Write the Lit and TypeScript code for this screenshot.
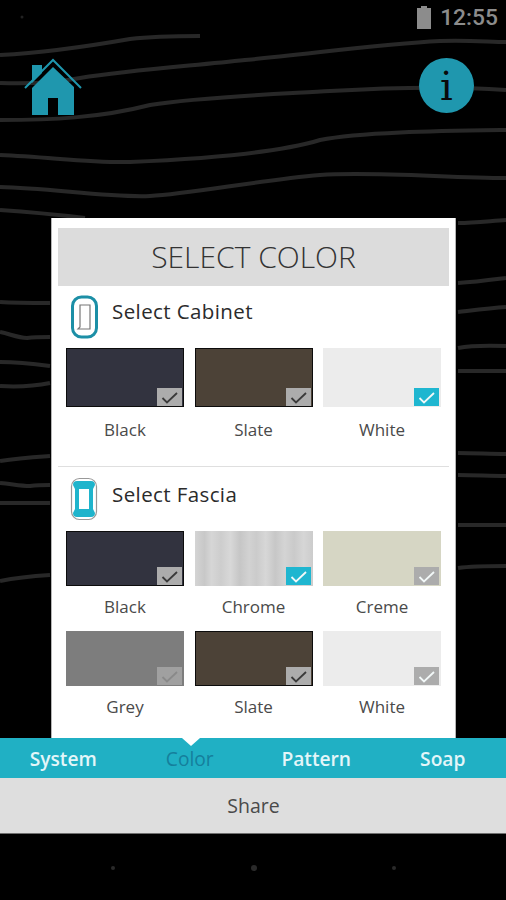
import { LitElement, html, css, svg } from 'lit'
import { customElement } from 'lit/decorators.js'

type Swatch = { name: string; color: string; on?: boolean; dark?: boolean; faint?: boolean; chrome?: boolean }

const cabinet: Swatch[] = [
    { name: 'Black', color: '#32333f', dark: true },
    { name: 'Slate', color: '#4c4237', dark: true },
    { name: 'White', color: '#ececec', on: true },
]

const fascia: Swatch[] = [
    { name: 'Black', color: '#32333f', dark: true },
    { name: 'Chrome', color: '#cfcfcf', on: true, chrome: true },
    { name: 'Creme', color: '#d6d6c4' },
    { name: 'Grey', color: '#7d7d7d', faint: true },
    { name: 'Slate', color: '#4c4237', dark: true },
    { name: 'White', color: '#ececec' },
]

const tabs = ['System', 'Color', 'Pattern', 'Soap']

const waves = [
    'M0 55 C40 53 90 46 130 39 C155 36 180 36 200 36',
    'M0 83 C30 84 60 82 80 78 C130 70 190 66 245 60 C310 54 380 44 440 41 C470 40 490 42 506 42',
    'M0 120 C50 120 100 118 150 105 C200 97 280 94 330 91 C380 88 450 86 506 90',
    'M0 155 C50 157 90 163 130 162 C180 160 270 155 320 140 C360 132 440 131 506 130',
    'M0 187 C50 188 110 198 150 196 C190 194 260 180 320 175 C370 171 450 178 506 178',
    'M0 210 C30 212 60 215 85 218',
    // left of the panel
    'M0 302 C15 303 35 303 50 303',
    'M0 332 C10 334 18 338 27 338 C35 337 42 337 50 337',
    'M0 362 C18 362 35 364 50 366',
    'M0 386 C18 387 35 386 50 383',
    'M0 461 C18 458 35 457 50 456',
    'M0 483 C12 484 20 486 30 486 C38 485 44 485 50 485',
    'M0 503 H50',
    'M0 581 C15 578 35 576 50 575',
    // right of the panel
    'M458 223 C475 223 490 221 506 220',
    'M458 283 C475 282 490 280 506 278',
    'M458 312 C475 310 490 308 506 307',
    'M458 348 C468 346 480 345 506 346',
    'M458 371 H506',
    'M458 453 C475 453 490 454 506 454',
    'M458 475 C475 475 490 476 506 476',
    'M458 525 H506',
    'M458 568 C472 566 490 566 506 566',
]

@customElement('app-root')
export class AppRoot extends LitElement {
    static styles = css`
      :host {
        display: block;
        width: 506px;
        height: 900px;
        position: relative;
        overflow: hidden;
        background: #000;
        font-family: "Open Sans", "Noto Sans", sans-serif;
      }
      .waves {
        position: absolute;
        left: 0;
        top: 0;
        filter: blur(0.7px);
      }
      .screen {
        position: relative;
        display: flex;
        flex-direction: column;
        height: 900px;
      }
      .status {
        height: 34px;
        display: flex;
        justify-content: flex-end;
        align-items: center;
        gap: 8px;
        padding-right: 8px;
        color: #8c8c8c;
        font: 500 22.8px Roboto, sans-serif;
      }
      .top {
        height: 184px;
        display: flex;
        justify-content: space-between;
        align-items: flex-start;
        padding: 24px 32px 0 24px;
        box-sizing: border-box;
      }
      .info {
        width: 55px;
        height: 55px;
        border-radius: 50%;
        background: #1f97ae;
        color: #0a0a0a;
        display: flex;
        align-items: center;
        justify-content: center;
        font: 400 40px "DejaVu Serif", serif;
      }
      .panel {
        width: 405px;
        height: 520px;
        margin-left: 51px;
        box-sizing: border-box;
        background: #fff;
        border-left: 1px solid #b5b5b5;
        border-right: 1px solid #b5b5b5;
        padding: 10px 6px 0;
      }
      .title {
        height: 58px;
        box-sizing: border-box;
        padding-bottom: 2px;
        background: #dcdcdc;
        color: #333;
        font-size: 30px;
        font-weight: 300;
        display: flex;
        align-items: center;
        justify-content: center;
      }
      .heading {
        display: flex;
        align-items: center;
        gap: 14px;
        padding-left: 12px;
        color: #2b2b2b;
        font-size: 20.5px;
        letter-spacing: 0.4px;
      }
      .heading.cab {
        height: 62px;
      }
      .heading.fas {
        height: 64px;
      }
      .heading.cab span {
        margin-top: -13px;
      }
      .heading.fas span {
        margin-top: -11px;
      }
      .grid {
        display: grid;
        grid-template-columns: repeat(3, 118px);
        column-gap: 10.5px;
        padding-left: 8px;
      }
      .cell {
        display: flex;
        flex-direction: column;
        align-items: center;
      }
      .chip {
        position: relative;
        width: 100%;
      }
      .chip.dark {
        box-shadow: inset 0 0 0 1px #0c0c0c;
      }
      .cab-grid .chip {
        height: 59px;
      }
      .fas-grid .chip {
        height: 55px;
      }
      .chip.chrome {
        background-image: linear-gradient(90deg, #d4d4d4 0%, #c8c8c8 8%, #d6d6d6 14%, #cdcdcd 22%, #d8d8d8 30%, #c6c6c6 38%, #d2d2d2 46%, #cbcbcb 52%, #d7d7d7 60%, #c7c7c7 68%, #d4d4d4 76%, #cacaca 84%, #d6d6d6 92%, #cccccc 100%);
      }
      .tick {
        position: absolute;
        right: 2px;
        bottom: 1px;
        width: 25px;
        height: 18px;
        background: #acacac;
        display: flex;
        align-items: center;
        justify-content: center;
      }
      .tick.on {
        background: #1fb6d0;
      }
      .label {
        color: #4a4a4a;
        font-size: 17px;
        line-height: 22px;
      }
      .cab-grid .label {
        margin-top: 12px;
      }
      .fas-grid .label {
        margin-top: 10px;
        margin-bottom: 13px;
      }
      .rule {
        height: 1px;
        margin-top: 25px;
        background: #dfdfdf;
      }
      .tabs {
        position: relative;
        height: 40px;
        background: #20b0c4;
        display: grid;
        grid-template-columns: repeat(4, 1fr);
        align-items: center;
        text-align: center;
        color: #e4f6f9;
        font-size: 19.2px;
        font-weight: 600;
      }
      .tabs .current {
        color: #157f9c;
        font-weight: 400;
      }
      .notch {
        position: absolute;
        left: 182px;
        top: 0;
        width: 0;
        height: 0;
        border-left: 9px solid transparent;
        border-right: 9px solid transparent;
        border-top: 8px solid #fff;
      }
      .share {
        height: 55px;
        background: #dedede;
        border-bottom: 1px solid #6f6f6f;
        display: flex;
        align-items: center;
        justify-content: center;
        padding-left: 1px;
        color: #4a4a4a;
        font-size: 19.5px;
      }
      .nav {
        display: flex;
        justify-content: space-between;
        align-items: center;
        padding: 31px 110px 0 111px;
      }
      .nav i {
        width: 4px;
        height: 4px;
        border-radius: 50%;
        background: #2a2a2a;
      }
      .nav i:nth-child(2) {
        width: 6px;
        height: 6px;
      }
    `

    private renderGrid(items: Swatch[], cls: string) {
        return html`
        <div class="grid ${cls}">
            ${items.map(s => html`
                <div class="cell">
                    <div class="chip ${s.dark ? 'dark' : ''} ${s.chrome ? 'chrome' : ''}" style="background-color: ${s.color}">
                        <div class="tick ${s.on ? 'on' : ''}" style="${s.faint ? 'opacity: 0.75' : ''}">
                            <svg width="17" height="13" viewBox="0 0 17 13">
                                <path d="M1.5 7l4.5 4.5L16 2" fill="none" stroke-width="1.8" stroke="${s.dark ? '#3a3a3a' : s.faint ? '#8e8e8e' : '#f2f8f8'}"/>
                            </svg>
                        </div>
                    </div>
                    <div class="label">${s.name}</div>
                </div>
            `)}
        </div>
        `
    }

    private renderCabinetIcon() {
        return html`
        <svg width="28" height="44" viewBox="0 0 28 44">
            <rect x="2.5" y="2" width="24" height="40" rx="9" fill="#fff" stroke="#1c8fa6" stroke-width="3"/>
            <path d="M10 10h10v24H8l2-2z" fill="none" stroke="#777" stroke-width="1.2"/>
        </svg>
        `
    }

    private renderFasciaIcon() {
        return html`
        <svg width="28" height="44" viewBox="0 0 28 44">
            <rect x="1.5" y="1.5" width="25" height="41" rx="8" fill="#fff" stroke="#999" stroke-width="1.2"/>
            <path d="M7 4h14q4 0 4 4l-2 4v20l2 4q0 4-4 4H7q-4 0-4-4l2-4V12L3 8q0-4 4-4z" fill="#1fb4cc"/>
            <rect x="9" y="12" width="10" height="20" fill="#fff"/>
        </svg>
        `
    }

    protected override render() {
        return html`
        <svg class="waves" width="506" height="900" viewBox="0 0 506 900">
            ${waves.map(d => svg`<path d=${d} fill="none" stroke="#282828" stroke-width="4"/>`)}
            <circle cx="22" cy="17" r="1.5" fill="#222"/>
        </svg>
        <div class="screen">
            <div class="status">
                <svg width="16" height="23" viewBox="0 0 16 23">
                    <path d="M5 0h6v2h4v21H1V2h4z" fill="#8c8c8c"/>
                </svg>
                <span>12:55</span>
            </div>
            <div class="top">
                <svg width="58" height="58" viewBox="0 0 58 58">
                    <path d="M8 30L29 9l21 20v28H34V40H24v17H8z" fill="#1f97ae"/>
                    <path d="M8 7h10v8L8 25z" fill="#1f97ae"/>
                    <path d="M1 30L29 2l28 28" fill="none" stroke="#1f97ae" stroke-width="2"/>
                </svg>
                <div class="info">i</div>
            </div>
            <div class="panel">
                <div class="title">SELECT COLOR</div>
                <div class="heading cab">${this.renderCabinetIcon()}<span>Select Cabinet</span></div>
                ${this.renderGrid(cabinet, 'cab-grid')}
                <div class="rule"></div>
                <div class="heading fas">${this.renderFasciaIcon()}<span>Select Fascia</span></div>
                ${this.renderGrid(fascia, 'fas-grid')}
            </div>
            <div class="tabs">
                <div class="notch"></div>
                ${tabs.map(t => html`<div class=${t === 'Color' ? 'current' : ''}>${t}</div>`)}
            </div>
            <div class="share">Share</div>
            <div class="nav"><i></i><i></i><i></i></div>
        </div>
        `
    }
}

declare global {
    interface HTMLElementTagNameMap {
      'app-root': AppRoot
    }
}
